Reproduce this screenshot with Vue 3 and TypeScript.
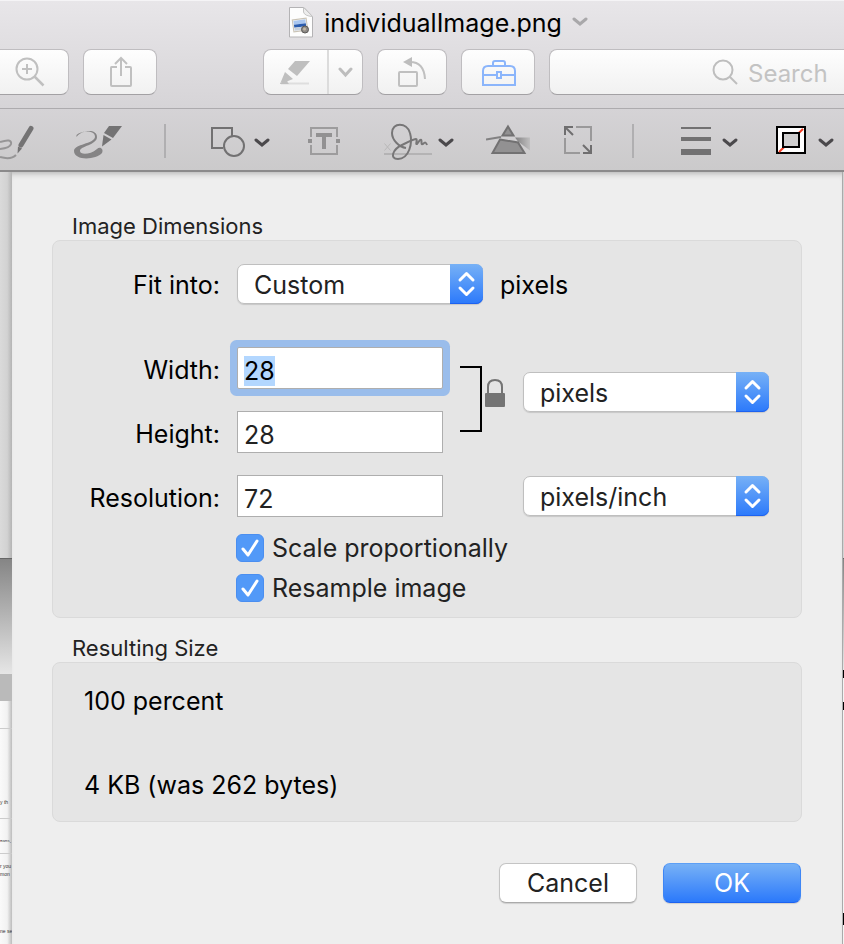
<script setup lang="ts">
import { onMounted, ref } from 'vue'

const fitInto = ref('Custom')
const width = ref('28')
const height = ref('28')
const resolution = ref('72')
const sizeUnit = ref('pixels')
const resolutionUnit = ref('pixels/inch')
const scale = ref(true)
const resample = ref(true)
const widthInput = ref<HTMLInputElement | null>(null)

onMounted(() => {
  widthInput.value?.focus()
  widthInput.value?.select()
})
</script>

<template>
  <div class="window">
    <header class="titlebar">
      <div class="title">
        <svg class="doc" width="26" height="34" viewBox="0 0 26 34" aria-hidden="true">
          <path d="M1.500 2.500h14.500l8.500 9v20.500h-23z" fill="#fdfdfd" stroke="#b4b3b5" />
          <path d="M15.500 2.500v4.500q1 4 9 4.500z" fill="#ededed" stroke="#c4c4c4" />
          <g transform="rotate(-8 12 20)">
            <rect x="5" y="14" width="14" height="12" fill="#f5f5f5" stroke="#c9c2b4" />
            <rect x="6" y="15" width="12" height="4" fill="#a9c6f0" />
            <rect x="6" y="19" width="12" height="3" fill="#2b5cae" />
            <rect x="6" y="22" width="12" height="3" fill="#c5cfdd" />
          </g>
          <circle cx="17" cy="24.500" r="3.500" fill="#8d8a86" stroke="#5a5856" />
          <circle cx="16.500" cy="24" r="1.500" fill="#c2b8a6" />
        </svg>
        <h1>individualImage.png</h1>
        <svg class="title-arrow" width="16" height="10" viewBox="0 0 16 10" aria-hidden="true">
          <path d="M2 2l6 5 6-5" fill="none" stroke="#a9a8aa" stroke-width="3" stroke-linecap="round" />
        </svg>
      </div>
      <div class="tools">
        <button class="tool first" aria-label="Zoom in">
          <svg width="32" height="32" viewBox="0 0 32 32">
            <g fill="none" stroke="#c0c0c0" stroke-width="2">
              <circle cx="13" cy="13" r="10.500" />
              <path d="M13 8v10M8 13h10" />
              <path d="M20.500 20.500l9 9" stroke-width="2.500" />
            </g>
          </svg>
        </button>
        <button class="tool wide" aria-label="Share">
          <svg width="26" height="32" viewBox="0 0 26 32">
            <g fill="none" stroke="#c0c0c0" stroke-width="2">
              <path d="M10 11H4.500Q4 11 4 12v17q0 1 1 1h18q1 0 1-1V12q0-1-1-1h-5" />
              <path d="M14 20V2M8 8l6-6 6 6" />
            </g>
          </svg>
        </button>
        <span class="spacer"></span>
        <div class="split">
          <button class="half" aria-label="Highlight">
            <svg width="32" height="28" viewBox="1 0 32 28">
              <path d="M16 3h15L18 18l-9-7z" fill="#bfbfbf" />
              <path d="M6 14l8 7-5 2-3 3H1z" fill="#bfbfbf" />
              <path d="M2 25.500h28" stroke="#dedede" stroke-width="2" />
              <path d="M1 26l5-5 4 5z" fill="#bfbfbf" />
            </svg>
          </button>
          <button class="half arrow" aria-label="Highlight options">
            <svg width="16" height="12" viewBox="1 0 16 12">
              <path d="M3 3l5.500 6L14 3" fill="none" stroke="#bdbdbd" stroke-width="3" stroke-linecap="round" />
            </svg>
          </button>
        </div>
        <button class="tool" aria-label="Rotate">
          <svg width="32" height="32" viewBox="2 0 32 32">
            <rect x="5" y="16" width="18" height="14" rx="1" fill="none" stroke="#c0c0c0" stroke-width="2" />
            <path d="M16 6q14 0 15 17" fill="none" stroke="#c0c0c0" stroke-width="2" />
            <path d="M9 6l9-5v10z" fill="#bdbdbd" />
          </svg>
        </button>
        <button class="tool wide" aria-label="Show markup toolbar">
          <svg width="36" height="28" viewBox="-1 0 36 28">
            <g fill="none" stroke="#8bb5fb" stroke-width="2">
              <path d="M2 27V13q0-5 5-5h22q5 0 5 5v14z" />
              <path d="M12 8V5q0-2 2-2h8q2 0 2 2v3M2 17h13M21 17h13" />
              <rect x="16" y="14" width="4" height="6" />
            </g>
          </svg>
        </button>
        <label class="search">
          <svg width="26" height="28" viewBox="0 0 26 28" aria-hidden="true">
            <g fill="none" stroke="#bebebe" stroke-width="2">
              <circle cx="11" cy="12" r="9.500" />
              <path d="M18 19l7 7" />
            </g>
          </svg>
          <input type="search" placeholder="Search" aria-label="Search" />
        </label>
      </div>
    </header>

    <nav class="markup" aria-label="Markup">
      <button aria-label="Sketch">
        <svg width="41" height="44" viewBox="0 120 41 44">
          <path d="M0 143q12-4 11 2-1 4-11 5M0 158q11 3 16-2" fill="none" stroke="#969596" stroke-width="2" />
          <path d="M31 129.500L21 146" stroke="#747374" stroke-width="5" stroke-linecap="round" />
          <path d="M18 147.500l4 2-4.500 5z" fill="#747374" />
        </svg>
      </button>
      <button aria-label="Draw">
        <svg width="59" height="44" viewBox="73 120 59 44">
          <path d="M76.500 136c5-5 19-5 18.500 2-1 7-21 7-21 14 0 10 22 9 28 2 2-4-2-7-5-4-7 6-17 6-17 2 0-5 17-6 17-14 0-9-16-7-20.500 0z" fill="#858485" />
          <path d="M109 127h13l-9 12-9-5z" fill="#747374" />
          <path d="M103.500 136l8 4.500-9.500 7z" fill="#747374" />
        </svg>
      </button>
      <span class="rule"></span>
      <button aria-label="Shapes">
        <svg width="78" height="44" viewBox="198 120 78 44">
          <path d="M223 149h-11v-20h20v8" fill="none" stroke="#727172" stroke-width="2" />
          <circle cx="234" cy="147" r="10" fill="none" stroke="#727172" stroke-width="2" />
          <path d="M256 141l6 5 6-5" fill="none" stroke="#4b494c" stroke-width="3" stroke-linecap="round" />
        </svg>
      </button>
      <button aria-label="Text">
        <svg width="42" height="44" viewBox="308 120 42 44">
          <path d="M311 138v-9h26v9M311 146v9h26v-9" fill="none" stroke="#9d9c9d" stroke-width="2" />
          <path d="M308 142h4M336 142h4" stroke="#929192" stroke-width="4" />
          <path d="M316 136h16M324 135v15" stroke="#929192" stroke-width="4" />
        </svg>
      </button>
      <button aria-label="Sign">
        <svg width="72" height="44" viewBox="382 120 72 44">
          <path d="M384 155h48" stroke="#b4b3b4" stroke-width="2" />
          <path d="M384.500 144.500l6 7M390.500 144.500l-6 7" stroke="#b9b8b9" fill="none" />
          <path d="M406 149c-7-1-14-8-14-15 0-11 15-11 18 0 3 10-1 26-12 26-9 0-5-10 4-14 7-3 11-6 14-6 2 0-1 6 1 5l3-4c3-2 0 6 3 4 2-2 3-2 4 1" fill="none" stroke="#777677" stroke-width="2" />
          <path d="M440 141l6 5 6-5" fill="none" stroke="#4b494c" stroke-width="3" stroke-linecap="round" />
        </svg>
      </button>
      <button aria-label="Adjust color">
        <svg width="46" height="44" viewBox="486 120 46 44">
          <defs>
            <linearGradient id="beam" x1="0" x2="1">
              <stop offset="0" stop-color="#828182" />
              <stop offset="1" stop-color="#c0bfc0" />
            </linearGradient>
          </defs>
          <path d="M515 138.500l15 0v13l-12-9z" fill="url(#beam)" />
          <path d="M508 127.500l5.500 9h-11z" fill="#929192" stroke="#727172" stroke-width="2" />
          <path d="M500 140.500l18 3 6.500 10.500h-32z" fill="#929192" stroke="#727172" stroke-width="2" />
          <path d="M486 140.500l15-2.500" stroke="#828182" stroke-width="2" />
        </svg>
      </button>
      <button aria-label="Adjust size">
        <svg width="36" height="44" viewBox="564 120 36 44">
          <path d="M576 128h15v14M565 139v15h15" fill="none" stroke="#9a999a" stroke-width="2" />
          <path d="M573 136l-8-8M565 136v-8h8M583 146l8 8M583 154h8v-8" fill="none" stroke="#6f6e6f" stroke-width="2" />
        </svg>
      </button>
      <span class="rule"></span>
      <button aria-label="Line style">
        <svg width="78" height="44" viewBox="666 120 78 44">
          <path d="M681 128h30v2h-30zM681 138h30v4h-30zM681 150h30v6h-30z" fill="#727172" />
          <path d="M724 141l6 5 6-5" fill="none" stroke="#4b494c" stroke-width="3" stroke-linecap="round" />
        </svg>
      </button>
      <button aria-label="Border color">
        <svg width="64" height="44" viewBox="776 120 64 44">
          <rect x="777" y="128" width="28" height="26" fill="#fff" stroke="#000" stroke-width="2" />
          <path d="M779 153l24-23" stroke="#f23a21" stroke-width="2" />
          <rect x="783" y="134" width="16" height="14" fill="#cfcecf" stroke="#000" stroke-width="2" />
          <path d="M820 141l6 5 6-5" fill="none" stroke="#4b494c" stroke-width="3" stroke-linecap="round" />
        </svg>
      </button>
    </nav>

    <main class="body">
      <div class="behind left">
        <div class="canvas"></div>
        <div class="photo"></div>
        <div class="band"></div>
        <div class="page">
          <p class="blank"></p>
          <p class="first-line">y th</p>
          <p class="cell">RNMS,</p>
          <p class="line">r you</p>
          <p>mon</p>
          <p class="last">ne se</p>
        </div>
      </div>

      <form class="sheet" @submit.prevent>
        <fieldset>
          <legend>Image Dimensions</legend>
          <div class="box dims">
            <label class="fit-label" for="fit">Fit into:</label>
            <div class="fit">
              <span class="select">
                <select id="fit" v-model="fitInto"><option>Custom</option></select>
                <svg width="33" height="40" viewBox="0 0 33 40" aria-hidden="true">
                  <path d="M10 16l6.500-6.500L23 16M10 24l6.500 6.500L23 24" />
                </svg>
              </span>
              <span class="suffix">pixels</span>
            </div>

            <label class="row-w" for="width">Width:</label>
            <input id="width" ref="widthInput" v-model="width" class="row-w" type="text" />
            <label class="row-h" for="height">Height:</label>
            <input id="height" v-model="height" class="row-h" type="text" />
            <svg class="link" width="46" height="68" viewBox="0 0 46 68" aria-hidden="true">
              <path d="M0 1h21v64H0" fill="none" stroke="#000" stroke-width="2" />
              <path d="M28 28v-7q0-7 7-7t7 7v7" fill="none" stroke="#747474" stroke-width="2" />
              <rect x="25" y="27" width="20" height="14" rx="1" fill="#747474" />
            </svg>
            <span class="select unit">
              <select v-model="sizeUnit" aria-label="Size unit"><option>pixels</option></select>
              <svg width="33" height="40" viewBox="0 0 33 40" aria-hidden="true">
                <path d="M10 16l6.500-6.500L23 16M10 24l6.500 6.500L23 24" />
              </svg>
            </span>

            <label class="row-r" for="resolution">Resolution:</label>
            <input id="resolution" v-model="resolution" class="row-r" type="text" />
            <span class="select res">
              <select v-model="resolutionUnit" aria-label="Resolution unit"><option>pixels/inch</option></select>
              <svg width="33" height="40" viewBox="0 0 33 40" aria-hidden="true">
                <path d="M10 16l6.500-6.500L23 16M10 24l6.500 6.500L23 24" />
              </svg>
            </span>

            <div class="checks">
              <label class="check">
                <input v-model="scale" type="checkbox" />
                <svg width="28" height="28" viewBox="0 0 28 28" aria-hidden="true"><path d="M7 15l5 6 9-14" /></svg>
                <span>Scale proportionally</span>
              </label>
              <label class="check">
                <input v-model="resample" type="checkbox" />
                <svg width="28" height="28" viewBox="0 0 28 28" aria-hidden="true"><path d="M7 15l5 6 9-14" /></svg>
                <span>Resample image</span>
              </label>
            </div>
          </div>
        </fieldset>

        <fieldset>
          <legend>Resulting Size</legend>
          <div class="box result">
            <p>100 percent</p>
            <p>4 KB (was 262 bytes)</p>
          </div>
        </fieldset>

        <div class="actions">
          <button type="button">Cancel</button>
          <button type="submit" class="primary">OK</button>
        </div>
      </form>

      <div class="behind right">
        <div class="canvas"></div>
        <div class="photo"></div>
        <div class="page">
          <span class="mark"></span>
          <span class="mark middle"></span>
          <span class="mark low"></span>
        </div>
      </div>
    </main>
  </div>
</template>

<style>
body {
  margin: 0;
}
</style>

<style scoped>
* {
  box-sizing: border-box;
}
.window {
  display: flex;
  flex-direction: column;
  min-height: 100vh;
  overflow: hidden;
  background: #eee;
  color: #000;
  font: 25px/32px Inter, "Liberation Sans", sans-serif;
}
button,
input,
select {
  margin: 0;
  font: inherit;
  color: #222;
}
button {
  padding: 0;
}
svg {
  display: block;
  flex: none;
}
h1,
p {
  margin: 0;
  font: inherit;
}

.titlebar {
  padding: 3px 0 13px;
  background: linear-gradient(#e8e6e9, #d6d4d7);
  border-top: 1px solid #f5f4f6;
  border-bottom: 1px solid #adabae;
}
.title {
  display: flex;
  align-items: center;
  justify-content: center;
  gap: 10px;
  height: 35px;
  padding-left: 32px;
}
.title h1 {
  padding-top: 2px;
}
.tools {
  display: flex;
  gap: 14px;
  margin-top: 10px;
}
.tool,
.split,
.search {
  display: flex;
  align-items: center;
  justify-content: center;
  height: 46px;
  border: 1px solid #bfbdc0;
  border-bottom-color: #a3a1a4;
  border-radius: 8px;
  background: linear-gradient(#fefefe, #f1f1f1);
}
.tool {
  width: 70px;
}
.tool.wide {
  width: 74px;
}
.tool.first {
  width: 69px;
  padding-right: 8px;
  border-left: 0;
  border-radius: 0 8px 8px 0;
}
.spacer {
  width: 78px;
}
.split {
  width: 100px;
}
.half {
  display: flex;
  align-items: center;
  justify-content: center;
  flex: 1;
  height: 44px;
  border: 0;
  background: none;
}
.half.arrow {
  flex: none;
  width: 35px;
  border-left: 2px solid #dcdcdc;
}
.search {
  flex: 1;
  justify-content: flex-end;
  gap: 10px;
  border-right: 0;
  border-radius: 8px 0 0 8px;
}
.search input {
  appearance: none;
  width: 96px;
  padding: 3px 0 0;
  border: 0;
  outline: 0;
  background: none;
  font-size: 24px;
}
.search input::-webkit-search-cancel-button {
  display: none;
}
.search input::placeholder {
  color: #c3c3c3;
  opacity: 1;
}

.markup {
  display: flex;
  align-items: center;
  gap: 32px;
  height: 63px;
  padding-top: 3px;
  background: linear-gradient(#d5d3d6, #cbcacb);
  border-bottom: 2px solid #8b8a8b;
}
.markup button {
  flex: none;
  border: 0;
  background: none;
}
.rule {
  flex: none;
  width: 2px;
  height: 34px;
  background: #b0afb1;
}

.body {
  display: flex;
  flex: 1;
}
.behind {
  display: flex;
  flex-direction: column;
  flex: none;
  overflow: hidden;
}
.left {
  width: 12px;
}
.right {
  width: 2px;
  border-left: 1px solid #aaa;
}
.canvas {
  height: 387px;
  background: linear-gradient(90deg, #dadada, #d2d2d2 60%, #b4b4b4);
  border-bottom: 1px solid #666;
}
.photo {
  height: 115px;
  background: linear-gradient(#858585, #e6e6e6);
}
.right .photo {
  height: 111px;
}
.band {
  height: 27px;
  background: #bababa;
}
.page {
  flex: 1;
  background: linear-gradient(90deg, #fafafa, #f2f2f2 60%, #bcbcbc);
  color: #333;
  font: 5px/8px "Liberation Sans", sans-serif;
  white-space: nowrap;
}
.mark {
  display: block;
  height: 8px;
  background: #000;
}
.mark.middle {
  margin-top: 24px;
}
.mark.low {
  height: 12px;
  margin-top: 203px;
}
.blank {
  height: 28px;
  border-bottom: 1px solid #ccc;
}
.first-line {
  height: 90px;
  padding-top: 69px;
  border-bottom: 1px solid #ccc;
}
.cell {
  height: 35px;
  padding-top: 18px;
  border-bottom: 1px solid #ccc;
  font: 4px/8px "Liberation Mono", monospace;
}
.line {
  padding-top: 8px;
}
.last {
  padding-top: 49px;
}

.sheet {
  flex: 1;
  min-width: 0;
  padding: 39px 40px 41px;
  background: #eee;
  box-shadow: inset 0 6px 6px -5px #aaa;
}
fieldset {
  min-width: 0;
  margin: 0;
  padding: 0;
  border: 0;
}
fieldset + fieldset {
  margin-top: 15px;
}
legend {
  padding: 2px 20px 0;
  color: #222;
  font-size: 22px;
  line-height: 27px;
}
.box {
  border: 1px solid #dadada;
  border-radius: 8px;
  background: #e5e5e5;
}
.dims {
  display: grid;
  grid-template-columns: 167px 206px 46px 246px;
  grid-template-rows: 61px 42px 42px 42px auto;
  column-gap: 17px;
  row-gap: 22px;
  align-items: center;
  padding: 23px 0 17px;
}
.dims > label {
  padding-top: 3px;
  text-align: right;
}
.dims > .fit-label {
  align-self: start;
  padding: 0;
  line-height: 42px;
}
.fit {
  display: flex;
  align-items: center;
  align-self: start;
  grid-column: 2 / -1;
  gap: 17px;
}
.suffix {
  padding-top: 2px;
}
.row-w {
  grid-row: 2;
}
.row-h {
  grid-row: 3;
}
.row-r {
  grid-row: 4;
}
input[type="text"] {
  width: 100%;
  height: 42px;
  padding: 5px 6px 0;
  border: 1px solid #aeaeae;
  border-radius: 0;
  outline: 0;
  background: #fff;
}
input[type="text"]:focus {
  color: #000;
  box-shadow: 0 0 0 7px #9abdeb;
  border-radius: 2px;
}
input::selection {
  background: #b3d7ff;
  color: #000;
}
.link {
  grid-row: 2 / 4;
  grid-column: 3;
}
.unit {
  grid-row: 2 / 4;
  grid-column: 4;
  align-self: start;
  margin-top: 25px;
}
.res {
  grid-row: 4;
  grid-column: 4;
}
.select {
  display: grid;
  width: 246px;
  height: 40px;
  border-radius: 7px;
  box-shadow: 0 1px 1px #0002;
}
.select > * {
  grid-area: 1 / 1;
}
.select select {
  appearance: none;
  width: 100%;
  height: 40px;
  padding: 2px 40px 0 16px;
  border: 1px solid #bfbfbf;
  border-radius: 7px;
  background: #fff;
}
.select svg {
  justify-self: end;
  border-radius: 0 7px 7px 0;
  background: linear-gradient(#77b1f6, #2b79fb);
  box-shadow: inset 0 -1px #1d62f0;
  pointer-events: none;
}
.select path,
.check path {
  fill: none;
  stroke: #fff;
  stroke-width: 3;
  stroke-linecap: round;
  stroke-linejoin: round;
}
.checks {
  display: grid;
  grid-column: 2 / -1;
  gap: 12px;
  margin: -7px 0 0 -1px;
}
.check {
  display: grid;
  grid-template-columns: 28px auto;
  align-items: center;
  justify-content: start;
  column-gap: 8px;
  height: 28px;
  color: #222;
}
.check input,
.check svg {
  grid-area: 1 / 1;
}
.check input {
  appearance: none;
  width: 28px;
  height: 28px;
  border: 1px solid #bbb;
  border-radius: 6px;
  background: #fff;
}
.check input:checked {
  border-color: #4a8ef0;
  background: #5299f8;
}
.check svg {
  z-index: 1;
  visibility: hidden;
  pointer-events: none;
}
.check input:checked + svg {
  visibility: visible;
}
.result {
  display: grid;
  gap: 52px;
  padding: 22px 31px 20px;
}
.actions {
  display: flex;
  justify-content: flex-end;
  gap: 26px;
  margin-top: 41px;
  padding-right: 1px;
}
.actions button {
  width: 138px;
  height: 40px;
  border: 1px solid #c4c4c4;
  border-bottom-color: #aaa;
  border-radius: 7px;
  background: #fff;
  box-shadow: 0 1px 1px #0002;
}
.actions .primary {
  border-color: #5c9ff6 #3e86f5 #1d62f0;
  background: linear-gradient(#77b1f6, #2b79fb);
  color: #fff;
}
</style>
